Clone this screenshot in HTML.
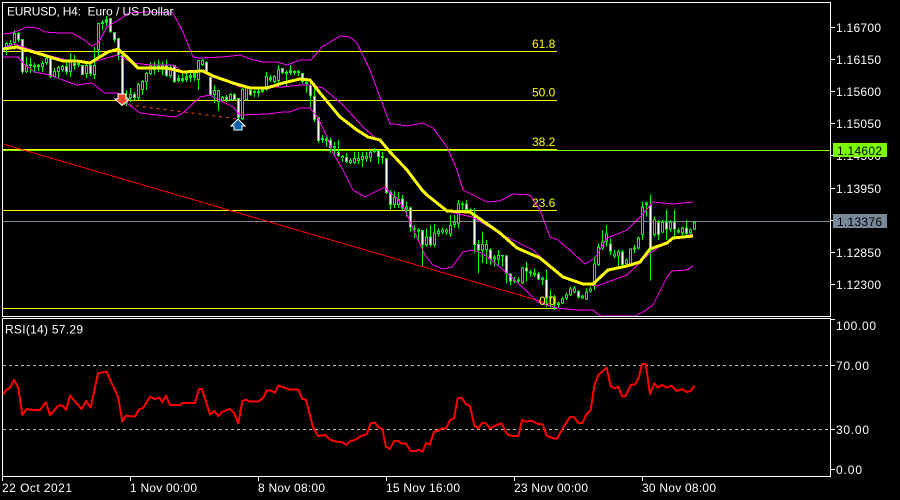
<!DOCTYPE html>
<html><head><meta charset="utf-8"><style>
html,body{margin:0;padding:0;background:#000;width:900px;height:500px;overflow:hidden}
svg{display:block}
text{font-family:"Liberation Sans",sans-serif;font-size:12px;fill:#fff}
.f{fill:#ff0}
.w,.b,.k,.t{fill:none}
.w{stroke:#0f0;stroke-width:1}
.b{stroke:#0f0;stroke-width:3}
.k{stroke:#000;stroke-width:1}
.t{stroke:#fff;stroke-width:1}
</style></head><body>
<svg width="900" height="500" viewBox="0 0 900 500" xmlns="http://www.w3.org/2000/svg">
<rect width="900" height="500" fill="#000"/>
<clipPath id="c"><rect x="3" y="3" width="827" height="313"/></clipPath>
<g clip-path="url(#c)">
<g shape-rendering="crispEdges">
<path d="M3 150.5H830" stroke="#7cfc00" fill="none"/>
<path d="M3 221.5H830" stroke="#778899" fill="none"/>
<path d="M3 51.5H557M3 100.5H557M3 149.5H557M3 210.5H557M3 308.5H557" stroke="#ff0" fill="none"/>
<path d="M3 144L557 306" stroke="#f00" fill="none"/>
<path d="M122 104L238 119" stroke="#ff4500" stroke-dasharray="3 4" fill="none"/>
</g>
<g shape-rendering="crispEdges" transform="translate(.5,0)">
<path class="w" d="M6 42V55M10 40V48M14 30V50M18 32V42M22 39V74M26 57V73M30 58V73M34 63V73M38 64V71M42 61V72M46 57V65M50 58V78M54 68V78M58 66V78M62 65V72M66 61V74M70 53V77M74 55V70M78 60V67M82 65V75M86 63V78M90 64V76M94 47V79M98 23V56M102 20V30M106 16V26M110 18V33M114 32V42M118 38V60M122 55V105M126 90V106M130 88V102M134 92V100M138 83V100M142 80V95M146 72V90M150 62V75M154 62V75M158 60V72M162 62V75M166 60V77M170 65V78M174 65V83M178 75V82M182 72V83M186 73V82M190 72V82M194 71V81M198 60V90M202 59V66M206 61V74M210 77V96M214 85V103M218 90V111M222 96V102M226 95V102M230 93V101M234 93V101M238 98V119M242 88V120M246 86V101M250 88V96M254 90V97M258 88V97M262 88V93M266 72V91M270 75V82M274 75V83M278 65V87M282 68V74M286 70V87M290 65V75M294 70V75M298 70V76M302 73V84M306 80V93M310 80V107M314 83V122M318 117V143M322 135V143M326 136V147M330 138V153M334 142V155M338 140V157M342 155V162M346 153V163M350 158V164M354 152V164M358 152V164M362 152V167M366 152V162M370 150V162M374 148V153M378 150V164M382 152V164M386 158V194M390 190V210M394 191V208M398 192V208"/>
<path class="b" d="M6 43V47M10 43V46M14 33V43M18 33V40M22 39V72M26 65V72M30 64V66M34 65V67M38 65V67M42 63V67M46 58V63M50 58V77M54 71V77M58 67V72M62 66V70M66 66V72M70 60V72M74 63V66M78 63V65M82 65V75M86 65V74M90 65V74M94 65V75M98 23V50M102 22V24M106 19V23M110 18V32M114 32V40M118 38V55M122 55V100M126 97V104M130 94V98M134 94V98M138 84V98M142 81V90M146 73V82M150 65V74M154 66V70M158 65V68M162 65V70M166 65V76M170 67V76M174 65V82M178 78V81M182 78V81M186 76V80M190 75V78M194 73V78M198 60V80M202 60V65M206 62V73M210 77V95M214 90V95M218 90V102M222 97V101M226 97V100M230 94V100M234 94V100M238 98V118M242 89V119M246 87V100M250 90V95M254 91V93M258 91V93M262 88V92M266 76V87M270 77V80M274 76V82M278 69V81M282 68V73M286 72V74M290 70V73M294 71V73M298 71V73M302 73V82M306 82V84M310 85V96M314 96V120M318 117V141M322 138V140M326 138V141M330 140V148M334 146V148M338 152V156M342 156V158M346 157V162M350 160V163M354 158V163M358 158V161M362 156V160M366 156V159M370 152V158M374 150V152M378 150V157M382 156V158M386 158V193M390 192V205M394 197V205M398 199V205"/>
<path class="k" d="M6 44V46M10 44V45M14 34V42M26 66V71M42 64V66M46 59V62M54 72V76M58 68V71M62 67V69M70 61V71M86 66V73M94 66V74M98 24V49M126 98V103M130 95V97M138 85V97M142 82V89M146 74V81M150 66V73M154 67V69M170 68V75M198 61V79M202 61V64M214 91V94M218 91V101M222 98V100M230 95V99M242 90V118M246 88V99M266 77V86M274 77V81M278 70V80M342 157V158M350 161V162M354 159V162M358 159V160M362 157V159M366 157V158M370 153V157M394 198V204M398 200V204"/>
<path class="t" d="M18 34V39M22 40V71M50 59V76M66 67V71M74 64V65M82 66V74M90 66V73M110 19V31M114 33V39M118 39V54M122 56V99M134 95V97M162 66V69M166 66V75M174 66V81M206 63V72M210 78V94M226 98V99M234 95V99M238 99V117M250 91V94M282 69V72M302 74V81M310 86V95M314 97V119M318 118V140M330 141V147M338 153V155M346 158V161M378 151V156M386 159V192M390 193V204"/>
</g>
<g shape-rendering="crispEdges" transform="translate(.5,160) scale(1,.33333)">
<path class="w" d="M402 105V150M406 125V170M410 140V215M414 195V235M418 205V240M422 210V318M426 205V260M430 195V260M434 192V262M438 205V230M442 203V222M446 205V225M450 165V230M454 165V205M458 120V205M462 125V150M466 120V155M470 145V155M474 145V280M478 240V340M482 215V310M486 240V312M490 265V315M494 285V320M498 270V318M502 285V320M506 285V370M510 340V375M514 350V370M518 352V370M522 320V372M526 305V365M530 330V350M534 325V350M538 335V360M542 350V375M546 328V440M550 390V445M554 405V450M558 425V445M562 410V432M566 398V420M570 380V408M574 378V400M578 390V415M582 405V417M586 385V420M590 380V398M594 290V390M598 250V318M602 210V270M606 195V260M610 235V285M614 270V295M618 270V318M622 270V320M626 295V320M630 265V315M634 255V280M638 230V268M642 125V240M646 125V170M650 105V362M654 170V230M658 180V240M662 180V220M666 150V240M670 180V215M674 150V235M678 205V220M682 200V225M686 180V225M690 205V225M694 185V210"/>
<path class="b" d="M402 115V145M406 140V148M410 142V203M414 205V210M418 208V215M422 210V255M426 230V255M430 230V255M434 218V255M438 212V222M442 208V218M446 208V218M450 195V222M454 185V195M458 130V190M462 130V135M466 130V150M470 147V152M474 160V255M478 252V272M482 252V272M486 252V270M490 268V298M494 290V298M498 285V298M502 285V290M506 287V340M510 340V365M514 360V365M518 358V364M522 322V370M526 322V335M530 335V340M534 338V345M538 340V358M542 352V360M546 358V415M550 408V415M554 410V430M558 428V435M562 415V430M566 403V415M570 385V405M574 382V398M578 393V412M582 407V415M586 395V418M590 385V395M594 310V375M598 260V315M602 245V265M606 220V245M610 250V275M614 280V290M618 275V290M622 275V315M626 298V312M630 265V312M634 262V268M638 232V265M642 140V225M646 128V135M650 135V270M654 178V225M658 186V225M662 186V218M666 185V208M670 185V208M674 185V208M678 210V217M682 203V220M686 202V222M690 208V220M694 186V208"/>
<path class="k" d="M406 143V145M418 211V212M426 233V252M434 221V252M438 215V219M442 211V215M446 211V215M450 198V219M454 188V192M458 133V187M482 255V269M486 255V267M494 293V295M498 288V295M522 325V367M534 341V342M542 355V357M550 411V412M554 413V427M558 431V432M562 418V427M566 406V412M570 388V402M574 385V395M582 410V412M586 398V415M590 388V392M594 313V372M598 263V312M602 248V262M606 223V242M614 283V287M618 278V287M626 301V309M630 268V309M638 235V262M642 143V222M646 131V132M654 181V222M662 189V215M670 188V205M678 213V214M682 206V217M690 211V217M694 189V205"/>
<path class="t" d="M402 118V142M410 145V200M422 213V252M430 233V252M466 133V147M474 163V252M478 255V269M490 271V295M506 290V337M510 343V362M526 325V332M538 343V355M546 361V412M578 396V409M610 253V272M622 278V312M650 138V267M658 189V222M666 188V205M674 188V205M686 205V219"/>
</g>
<g shape-rendering="crispEdges" fill="none">
<polyline stroke="#f0f" points="3,34 12,33 20,30 27,27 37,28 45,32 60,33 72,33 83,39 92,46 98,43 107,27 122,18 128,13 147,12 173,13 183,32 193,57 200,58 223,57 240,55 250,59 263,62 277,62 287,65 300,60 311,60 322,47 340,36 350,37 357,43 370,70 380,97 390,124 395,124 407,126 423,123 433,128 447,147 457,170 463,190 487,202 500,201 513,194 530,195 540,210 550,237 558,240 573,253 585,264 595,258 607,238 627,230 642,215 653,202 673,204 693,202"/>
<polyline stroke="#f0f" points="3,57 18,57 25,65 35,72 50,75 68,82 77,85 92,83 105,93 118,93 123,100 140,113 157,115 175,117 183,113 200,97 210,95 223,102 233,107 240,115 267,114 283,112 290,112 300,108 310,108 318,118 327,137 333,153 343,170 353,190 365,197 375,192 385,187 390,193 397,198 405,210 415,233 425,255 433,265 443,269 452,267 463,252 472,250 482,253 500,267 518,283 538,302 557,308 577,310 593,310 600,316 635,316 643,312 653,305 667,277 672,271 687,270 693,266"/>
<polyline stroke="#f0f" points="3,48 15,44 23,47 47,55 67,60 90,63 100,60 117,55 133,63 150,65 173,65 183,72 207,72 220,78 240,87 267,87 283,87 300,85 310,85 323,88 343,105 363,127 380,142 400,162 413,178 427,195 450,212 472,217 503,235 533,250 560,275 583,284 597,286 627,275 650,253 670,240 693,234"/>
</g>
<g shape-rendering="crispEdges" fill="none" stroke="#ff0" stroke-width="3">
<polyline points="3,49 17,47 23,49 37,53 53,58 63,61 77,61 90,63 98,58 108,52 118,49 127,57 138,68 167,68 183,72 203,71 213,76 233,83 250,88 267,88 283,83 300,79 310,80 320,93 340,117 357,130 368,137 380,140 390,152 407,170 422,190 427,195 447,211 470,212 500,233 517,248 540,258 563,277 583,284 593,284 608,270 627,266 640,262 650,249 667,243 673,238 693,236"/>
</g>
<polygon points="118,94 126,94 126,99 129,99 122,105.500 115,99 118,99" fill="#e8482a" stroke="#fff" stroke-width="1" shape-rendering="crispEdges"/>
<polygon points="238,119 245,126 242,126 242,130 234,130 234,126 231,126" fill="#0a5fa8" stroke="#fff" stroke-width="1" shape-rendering="crispEdges"/>
<text x="7" y="15.500" textLength="74">EURUSD, H4:</text>
<text x="87.500" y="15.500" textLength="86">Euro / US Dollar</text>
<text class="f" x="532" y="48">61.8</text>
<text class="f" x="532" y="96.500">50.0</text>
<text class="f" x="532" y="146">38.2</text>
<text class="f" x="532" y="207">23.6</text>
<text class="f" x="539" y="305">0.0</text>
</g>
<g shape-rendering="crispEdges" fill="none" stroke="#fff">
<rect x="2.500" y="2.500" width="828" height="314"/>
<path d="M2.500 318.500H830.500V476.500H2.500V318.500"/>
<path d="M831 27.500H835M831 59.500H835M831 91.500H835M831 123.500H835M831 155.500H835M831 188.500H835M831 220.500H835M831 252.500H835M831 284.500H835M831 319.500H835M831 365.500H835M831 429.500H835M831 469.500H835"/>
<path d="M2.500 476V481M130.500 476V481M258.500 476V481M386.500 476V481M514.500 476V481M642.500 476V481"/>
</g>
<path d="M3 365.500H830M3 429.500H830" stroke="#c0c0c0" stroke-dasharray="3 3" fill="none" shape-rendering="crispEdges"/>
<g fill="none" stroke="#f00" stroke-width="6" stroke-linejoin="round" shape-rendering="crispEdges">
<polyline transform="translate(0,315) scale(.33333)" points="10,238 18,225 30,218 42,195 55,218 67,300 80,282 100,285 120,285 137,262 150,300 175,272 188,272 198,285 210,242 245,282 258,258 272,278 294,175 320,170 335,205 345,225 355,250 367,320 378,302 405,305 415,285 430,278 450,245 465,252 478,248 487,262 498,242 510,270 540,270 548,264 585,264 597,222 606,222 630,298 643,288 655,303 667,290 690,282 703,295 715,325 727,258 738,254 750,260 775,260 790,248 800,226 812,226 825,233 835,212 848,216 870,224 895,224 907,252 918,254 940,340 955,363 975,360 992,375 1010,380 1027,382 1040,390 1050,378"/>
<polyline transform="translate(350,315) scale(.33333)" points="0,378 15,375 35,362 50,358 62,325 75,323 85,337 97,342 108,395 120,402 132,378 145,378 155,386 168,386 182,408 200,408 205,404 218,410 228,384 240,388 252,350 265,348 275,340 288,340 300,315 312,310 323,250 335,248 348,268 360,273 373,332 385,340 397,323 408,325 420,340 440,330 455,325 470,355 480,362 505,363 516,315 527,320 545,317 565,327 578,328 590,362 610,370 622,370 640,337 660,306 670,306 687,324 697,324 710,297 722,285 733,212 745,180 770,158 782,214 795,220 805,215 817,245 827,243 842,210 855,208 866,188 876,147 887,147 900,237 913,205 923,218 937,210 950,218 965,212 980,228 997,222 1010,231 1022,228 1033,212"/>
</g>
<text x="5" y="333.500" textLength="78">RSI(14) 57.29</text>
<text x="836" y="32" textLength="45">1.16700</text>
<text x="836" y="64" textLength="45">1.16150</text>
<text x="836" y="96" textLength="45">1.15600</text>
<text x="836" y="128" textLength="45">1.15050</text>
<text x="836" y="160" textLength="45">1.14500</text>
<text x="836" y="193" textLength="45">1.13950</text>
<text x="836" y="257" textLength="45">1.12850</text>
<text x="836" y="289" textLength="45">1.12300</text>
<rect x="833" y="143" width="54" height="14" fill="#7cfc00"/>
<text x="837" y="155" textLength="45" style="fill:#000">1.14602</text>
<rect x="833" y="214" width="54" height="14" fill="#778899"/>
<text x="837" y="226" textLength="45" style="fill:#000">1.13376</text>
<text x="836" y="330" textLength="40">100.00</text>
<text x="836" y="370" textLength="33">70.00</text>
<text x="836" y="434" textLength="33">30.00</text>
<text x="836" y="474" textLength="26">0.00</text>
<text x="2" y="492" textLength="70">22 Oct 2021</text>
<text x="130" y="492" textLength="67">1 Nov 00:00</text>
<text x="258" y="492" textLength="67">8 Nov 08:00</text>
<text x="386" y="492" textLength="74">15 Nov 16:00</text>
<text x="514" y="492" textLength="74">23 Nov 00:00</text>
<text x="642" y="492" textLength="74">30 Nov 08:00</text>
</svg>
</body></html>
